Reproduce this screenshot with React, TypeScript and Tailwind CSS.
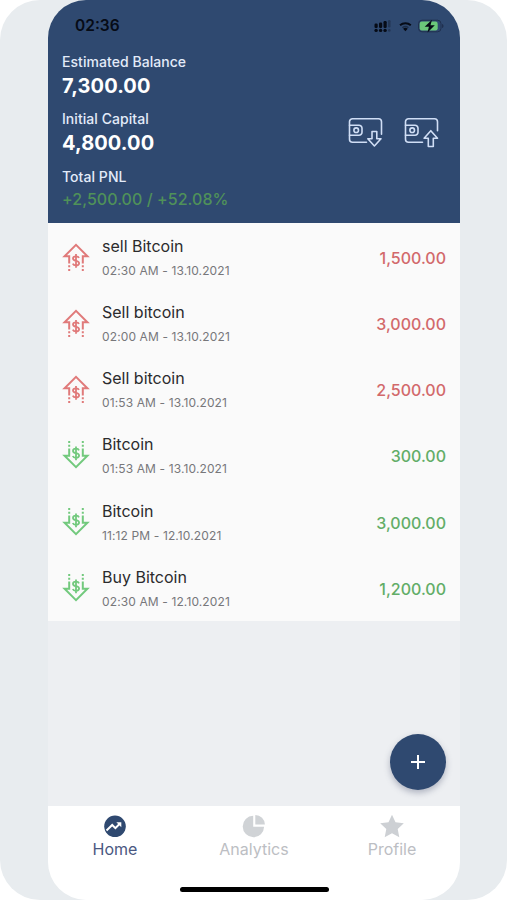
import React from 'react';

interface Transaction {
  id: number;
  title: string;
  date: string;
  amount: string;
  type: 'sell' | 'buy';
}

const transactions: Transaction[] = [
  { id: 1, title: 'sell Bitcoin', date: '02:30 AM - 13.10.2021', amount: '1,500.00', type: 'sell' },
  { id: 2, title: 'Sell bitcoin', date: '02:00 AM - 13.10.2021', amount: '3,000.00', type: 'sell' },
  { id: 3, title: 'Sell bitcoin', date: '01:53 AM - 13.10.2021', amount: '2,500.00', type: 'sell' },
  { id: 4, title: 'Bitcoin', date: '01:53 AM - 13.10.2021', amount: '300.00', type: 'buy' },
  { id: 5, title: 'Bitcoin', date: '11:12 PM - 12.10.2021', amount: '3,000.00', type: 'buy' },
  { id: 6, title: 'Buy Bitcoin', date: '02:30 AM - 12.10.2021', amount: '1,200.00', type: 'buy' },
];

const StatusIcons = () => (
  <svg width="70" height="16" viewBox="0 0 70 16" className="mr-[2px] text-[#060b16]">
    {/* Signal */}
    <g fill="currentColor">
      <rect x="0.5" y="5.5" width="3.2" height="4.5" rx="1.2" />
      <rect x="5" y="4.5" width="3.2" height="5.5" rx="1.2" />
      <rect x="9.5" y="3" width="3.2" height="7" rx="1.2" />
      <rect x="14" y="2" width="2.5" height="7.5" rx="1.2" opacity="0.3" />
      <circle cx="2.1" cy="12.4" r="1.7" />
      <circle cx="6.6" cy="12.4" r="1.7" />
      <circle cx="11.1" cy="12.4" r="1.7" />
      <circle cx="15.3" cy="12.4" r="1.3" opacity="0.3" />
    </g>
    {/* Wifi */}
    <g fill="none" stroke="currentColor" strokeWidth="1.9">
      <path d="M26 7.3a8 8 0 0 1 10.8 0" />
      <path d="M28.4 9.7a4.6 4.6 0 0 1 6 0" opacity="0.45" strokeWidth="1.4" />
    </g>
    <path d="M31.4 13.2l-2.3-2.5a3.4 3.4 0 0 1 4.6 0z" fill="currentColor" />
    {/* Battery */}
    <rect x="44.5" y="2.2" width="22.5" height="11.6" rx="3.5" fill="none" stroke="#20304f" strokeWidth="1" />
    <rect x="45.7" y="3.5" width="18" height="9" rx="2.2" fill="#6bc87a" />
    <path d="M68 6c2 .4 2 3.600 0 4z" fill="#20304f" />
    <path d="M58 1.800l-7.300 7h4.200l-1.400 5.600 7.300-7.200h-4.300z" fill="currentColor" />
  </svg>
);

const WalletIcon: React.FC<{ direction: 'down' | 'up' }> = ({ direction }) => (
  <svg
    width="36"
    height="32"
    viewBox="0 0 36 32"
    fill="none"
    stroke="#d0def5"
    strokeWidth="1.6"
    strokeLinejoin="round"
    strokeLinecap="round"
  >
    <path
      d={
        direction === 'down'
          ? 'M18.500 26.200H4.500a3 3 0 0 1-3-3V5.800a3 3 0 0 1 3-3h26a3 3 0 0 1 3 3v12.500'
          : 'M18.500 26.200H4.500a3 3 0 0 1-3-3V5.800a3 3 0 0 1 3-3h26a3 3 0 0 1 3 3v9'
      }
    />
    <path d="M1.500 9.200h9.500a3 3 0 0 1 3 3v4a3 3 0 0 1-3 3H1.500" />
    <circle cx="8.200" cy="14.200" r="2.300" />
    {direction === 'down' ? (
      <path d="M24 15.500h4.800v7.300h4.200l-6.600 7.200-6.600-7.200h4.200z" />
    ) : (
      <path d="M24.300 30.500v-8.300h-4.200l6.700-7.500 6.700 7.500h-4.200v8.300z" />
    )}
  </svg>
);

const TradeIcon: React.FC<{ type: 'sell' | 'buy' }> = ({ type }) => (
  <svg
    width="28"
    height="30"
    viewBox="0 0 28 30"
    className={type === 'sell' ? 'mt-px text-[#e07a7a]' : 'mt-px text-[#72c97d]'}
  >
    <g
      fill="none"
      stroke="currentColor"
      strokeWidth="2"
      transform={type === 'buy' ? 'translate(0 30) scale(1 -1)' : undefined}
    >
      <path d="M7.200 21.500V14.200H2.600L14 2.900l11.400 11.300h-4.600V21.500" />
      <path d="M7.200 23.300v2M7.200 26.900v2M20.800 23.300v2M20.800 26.900v2" />
    </g>
    <g
      fill="none"
      stroke="currentColor"
      strokeWidth="1.800"
      transform={type === 'buy' ? 'translate(0 -5.600)' : undefined}
    >
      <path d="M17 15.900c-.4-1-1.500-1.600-3-1.600-1.800 0-3 .9-3 2.200 0 1.400 1.100 1.900 3 2.300 2 .4 3.100 1 3.100 2.400 0 1.300-1.200 2.200-3.100 2.200-1.600 0-2.800-.7-3.200-1.800M14 12v13.800" />
    </g>
  </svg>
);

const TransactionRow: React.FC<{ item: Transaction }> = ({ item }) => (
  <li className="flex h-[66.25px] items-center px-[14px]">
    <TradeIcon type={item.type} />
    <div className="ml-3 flex-1 pt-[3px]">
      <p className="text-[16px] leading-[22px] text-[#2b2b2d]">{item.title}</p>
      <p className="mt-1 text-[12px] leading-[20px] tracking-[0.12px] text-[#77777a]">{item.date}</p>
    </div>
    <span className={`pt-[3px] text-[16px] font-medium ${item.type === 'sell' ? 'text-[#d2696b]' : 'text-[#62ad67]'}`}>
      {item.amount}
    </span>
  </li>
);

const BottomNav = () => (
  <nav className="flex h-[94px] flex-col bg-white">
    <div className="grid grid-cols-[134px_144px_132px] pt-2 text-[16px] leading-[20px] text-[#bcbec3]">
      <div className="flex flex-col items-center gap-[1px]">
        <svg width="24" height="24" viewBox="0 0 24 24">
          <circle cx="12" cy="12.300" r="10.800" fill="#2f4970" />
          <path d="M3.500 16.500l5.700-5.500 3.200 3.200 4.600-4.700" fill="none" stroke="#fff" strokeWidth="2" />
          <path d="M13.300 8.200h5v5z" fill="#fff" />
        </svg>
        <span className="text-[#4a5881]">Home</span>
      </div>
      <div className="flex flex-col items-center gap-[1px]">
        <svg width="24" height="24" viewBox="0 0 24 24" fill="#d0d3d6">
          <path d="M11.200 1.800v10.900h10.900A10.700 10.700 0 1 1 11.200 1.800z" />
          <path d="M13.300 1v9.600h9.600A9.800 9.800 0 0 0 13.300 1z" />
        </svg>
        <span>Analytics</span>
      </div>
      <div className="flex flex-col items-center gap-[1px]">
        <svg width="24" height="24" viewBox="0 0 24 24" fill="#cdd0d4">
          <path d="M12 .8l3.500 7.500 8.300 1-6.100 5.700 1.600 8.200L12 19.200l-7.300 4 1.600-8.200L.2 9.300l8.300-1z" />
        </svg>
        <span>Profile</span>
      </div>
    </div>
    <div className="mx-auto mt-auto mb-[8px] h-[5px] w-[149px] rounded-full bg-black" />
  </nav>
);

export default function App() {
  return (
    <div className="h-[900px] w-[507px] bg-white font-['Inter',sans-serif]">
      <div className="flex h-full justify-center overflow-hidden rounded-[40px] bg-[#e8ecef]">
        <div className="ml-px flex h-full w-[412px] flex-col overflow-hidden rounded-[38px] bg-[#edeff2]">
          <header className="h-[223px] shrink-0 bg-[#2f4970] px-[14px] text-white">
            <div className="flex h-[52px] items-center justify-between pl-[13px]">
              <span className="text-[15.5px] font-semibold text-[#060b16]">02:36</span>
              <StatusIcons />
            </div>
            <div className="flex justify-between">
              <div>
                <p className="text-[14px] leading-5 font-medium tracking-[0.05px] text-[#e3ebf9]">Estimated Balance</p>
                <p className="text-[20px] leading-7 font-bold tracking-[0.1px]">7,300.00</p>
                <p className="mt-[9px] text-[14px] leading-5 font-medium tracking-[0.05px] text-[#e3ebf9]">Initial Capital</p>
                <p className="text-[20px] leading-7 font-bold tracking-[0.1px]">4,800.00</p>
                <p className="mt-[10px] text-[14px] leading-5 font-medium tracking-[0.05px] text-[#e3ebf9]">Total PNL</p>
                <p className="text-[16px] leading-6 font-medium tracking-[0.05px] text-[#4f9159]">+2,500.00 / +52.08%</p>
              </div>
              <div className="mt-[64px] mr-[6px] flex gap-5">
                <WalletIcon direction="down" />
                <WalletIcon direction="up" />
              </div>
            </div>
          </header>

          <ul className="shrink-0 bg-[#fafafa]">
            {transactions.map((item) => (
              <TransactionRow key={item.id} item={item} />
            ))}
          </ul>

          <div className="flex flex-1 items-end justify-end pr-[14px] pb-4">
            <button
              aria-label="Add"
              className="flex h-[56px] w-[56px] items-center justify-center rounded-full bg-[#2f4970] shadow-[0_3px_6px_rgba(60,70,100,0.35)]"
            >
              <svg width="16" height="16" viewBox="0 0 16 16" stroke="#fff" strokeWidth="2">
                <path d="M8 1v14M1 8h14" />
              </svg>
            </button>
          </div>

          <BottomNav />
        </div>
      </div>
    </div>
  );
}
